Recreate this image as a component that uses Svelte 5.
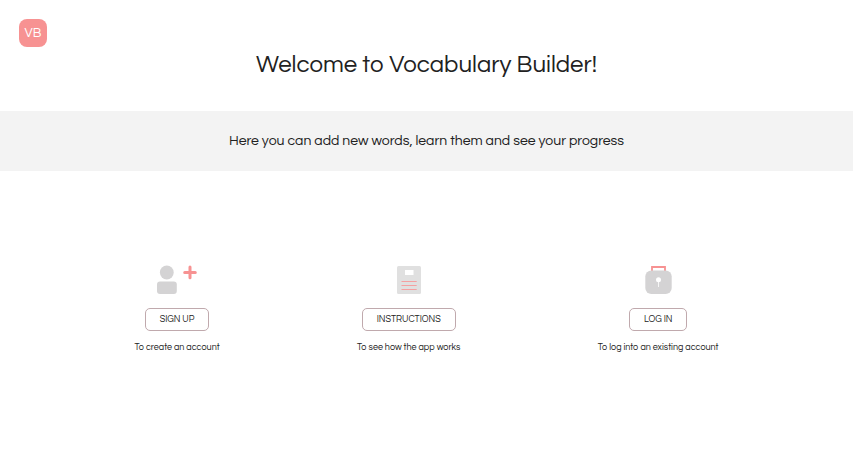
<script>
  const actions = [
    { icon: 'signup', label: 'SIGN UP', note: 'To create an account' },
    { icon: 'instructions', label: 'INSTRUCTIONS', note: 'To see how the app works' },
    { icon: 'login', label: 'LOG IN', note: 'To log into an existing account' }
  ];
</script>

<div class="page">
  <header>
    <a class="logo" href="/">VB</a>
    <h1>Welcome to Vocabulary Builder!</h1>
  </header>
  <p class="banner">Here you can add new words, learn them and see your progress</p>
  <main>
    {#each actions as action}
      <section>
        {#if action.icon === 'signup'}
          <svg width="40" height="29" viewBox="0 0 40 29" aria-hidden="true">
            <circle cx="9.8" cy="7.5" r="6.9" fill="#d4d3d4" />
            <rect y="16.5" width="19.8" height="12.5" rx="3" fill="#d4d3d4" />
            <path d="M27.7 7.4H38.3M33 2.1V12.7" stroke="#f79292" stroke-width="3" stroke-linecap="round" />
          </svg>
        {:else if action.icon === 'instructions'}
          <svg width="24" height="29" viewBox="0 0 24 29" aria-hidden="true">
            <rect y="1" width="24" height="28" rx="1.5" fill="#e0e0e0" />
            <rect x="8" y="5" width="8.5" height="5" fill="#fff" />
            <path d="M4.5 16.5H19.7M4.5 20.5H19.7M4.5 24.5H19.7" stroke="#f5a0a0" stroke-width="1" />
          </svg>
        {:else}
          <svg width="27" height="29" viewBox="0 0 27 29" aria-hidden="true">
            <path d="M7 7V2H20V7" fill="none" stroke="#f79292" stroke-width="1.8" />
            <rect x="0.3" y="5.5" width="26.4" height="23.5" rx="6" fill="#d4d3d4" />
            <circle cx="13.5" cy="14.8" r="2.5" fill="#fff" />
            <path d="M13.5 16V22" stroke="#fff" stroke-width="0.8" />
          </svg>
        {/if}
        <button type="button">{action.label}</button>
        <p>{action.note}</p>
      </section>
    {/each}
  </main>
</div>

<style>
  :global(body) {
    margin: 0;
    background: #fff;
  }
  .page {
    font-family: Questrial, Inter, "Liberation Sans", sans-serif;
    color: #212121;
  }
  header {
    display: flex;
    flex-direction: column;
    padding: 19px 19px 28px;
  }
  .logo {
    width: 28px;
    height: 28px;
    border-radius: 8px;
    background: #f79292;
    color: #fff;
    font-size: 13px;
    line-height: 28px;
    text-align: center;
    text-decoration: none;
  }
  h1 {
    margin: 0;
    font-size: 24px;
    font-weight: 400;
    line-height: 36px;
    text-align: center;
  }
  .banner {
    margin: 0;
    padding: 20px;
    background: #f3f3f3;
    font-size: 14px;
    line-height: 20px;
    text-align: center;
  }
  main {
    display: flex;
    justify-content: space-evenly;
    padding-top: 94px;
  }
  section {
    display: flex;
    flex-direction: column;
    align-items: center;
    padding: 0 3px;
  }
  svg {
    display: block;
  }
  button {
    margin: 14px 0 10px;
    padding: 0 14px;
    border: 1px solid #c0a9ad;
    border-radius: 5px;
    background: #fff;
    color: inherit;
    font-family: inherit;
    font-size: 9px;
    line-height: 21px;
    cursor: pointer;
  }
  section p {
    margin: 0;
    font-size: 9px;
    line-height: 14px;
  }
</style>
